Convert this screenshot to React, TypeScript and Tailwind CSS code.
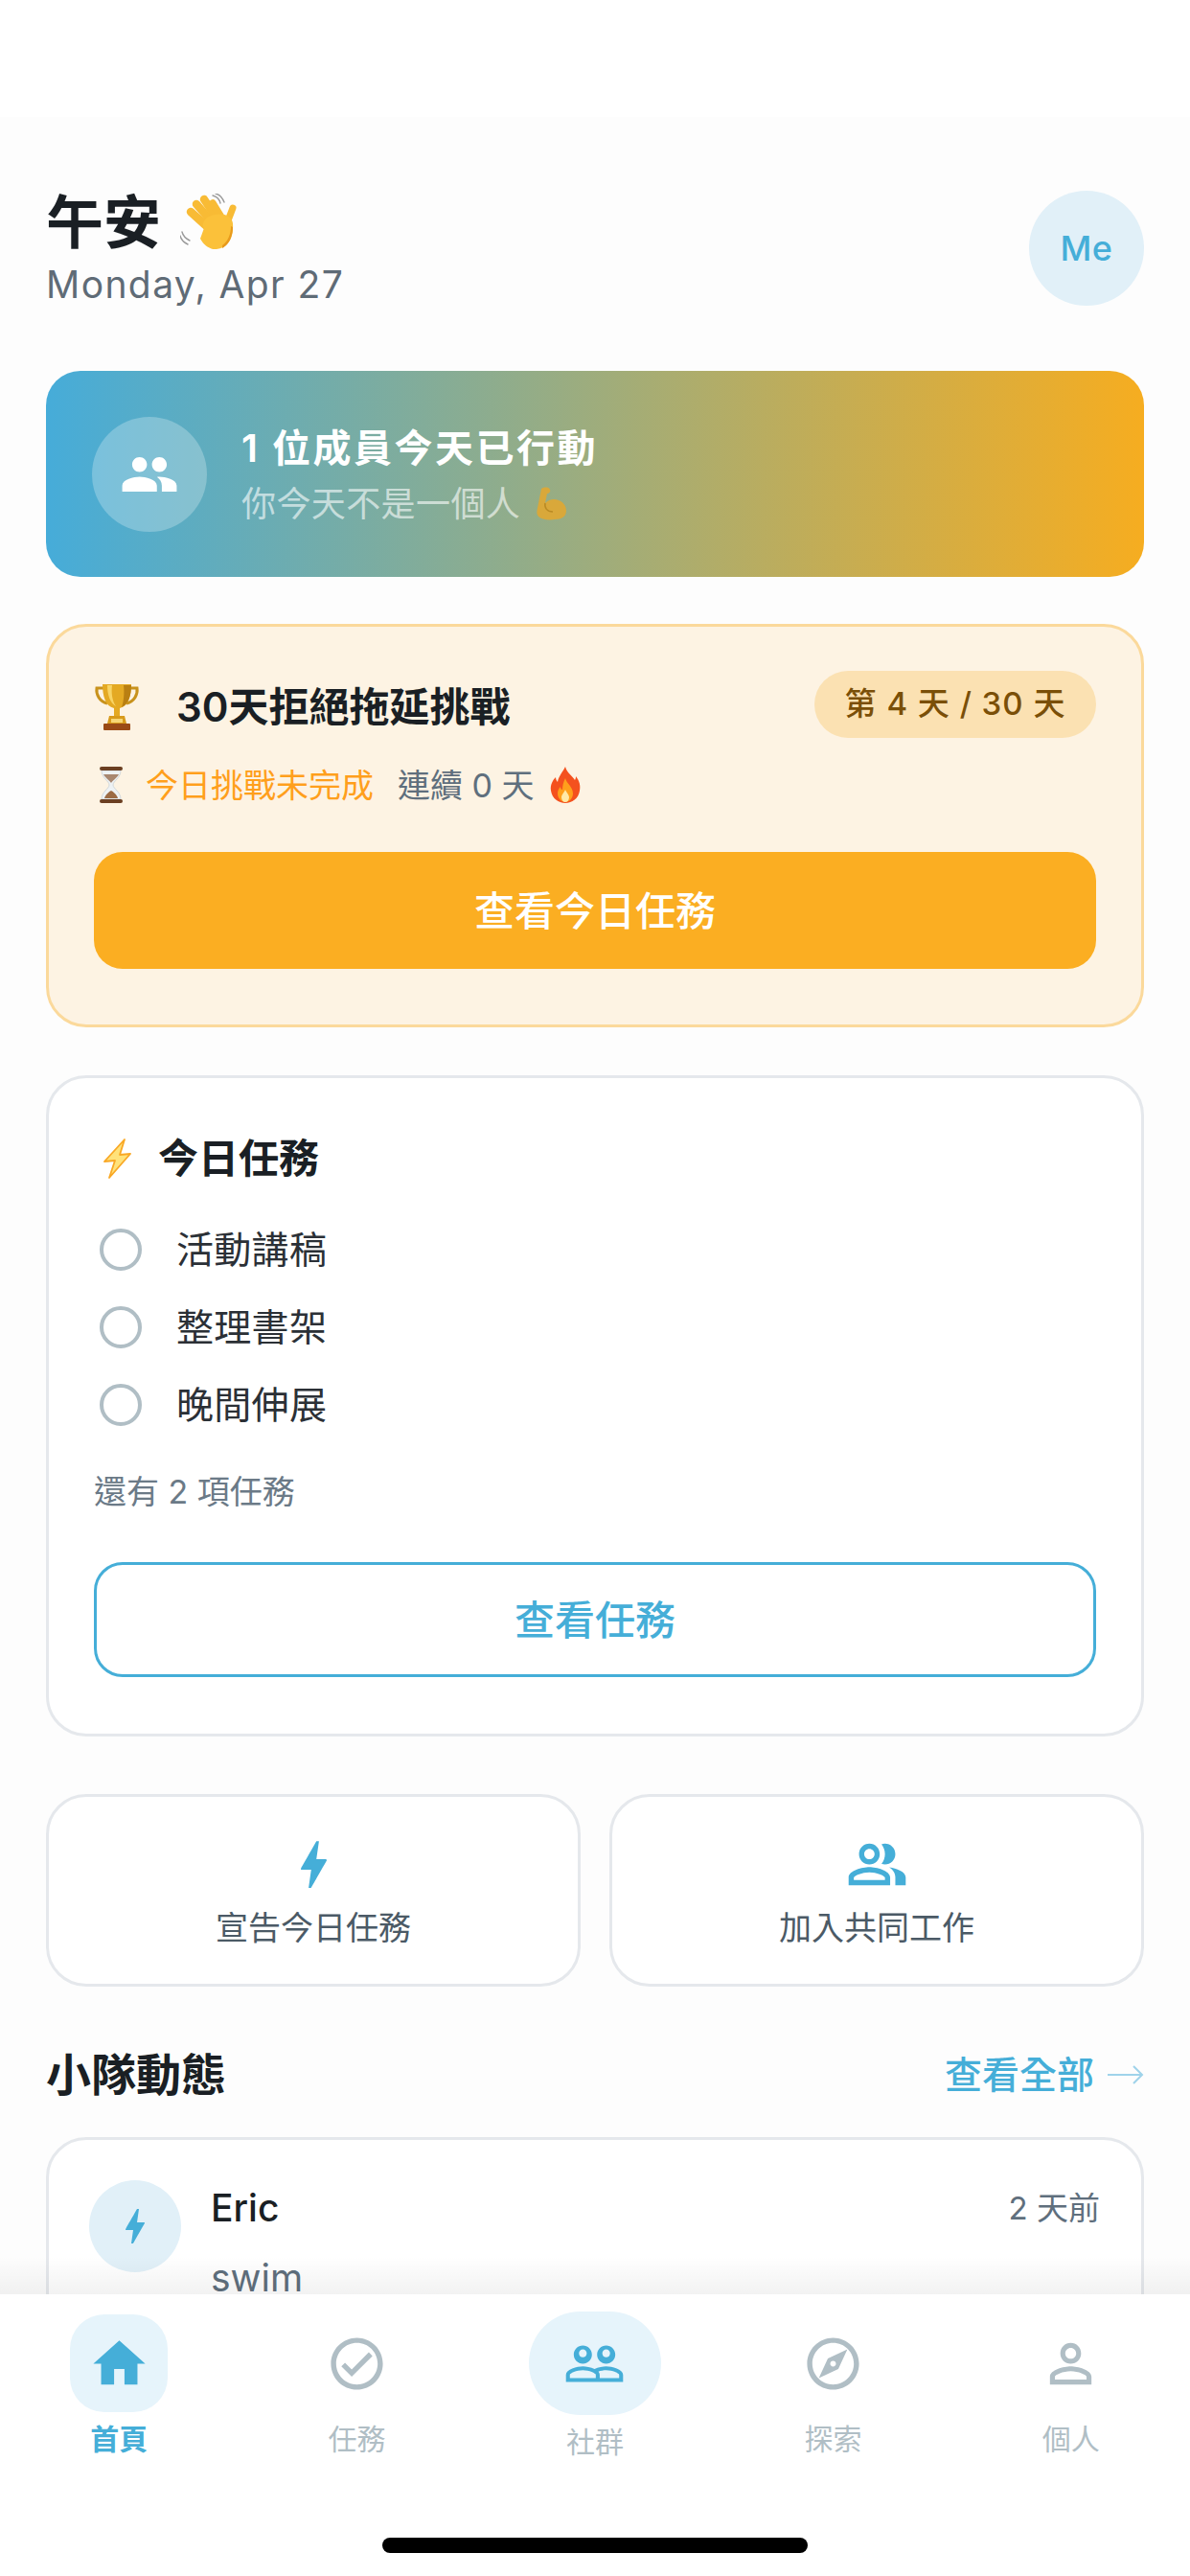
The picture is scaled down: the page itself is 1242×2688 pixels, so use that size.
const BLUE = "#45aed8"
const GREY = "#b0bec5"

const PATHS = {
  home: "M10 20v-6h4v6h5v-8h3L12 3 2 12h3v8z",
  check:
    "M12 2C6.48 2 2 6.48 2 12s4.48 10 10 10 10-4.48 10-10S17.52 2 12 2zm0 18c-4.41 0-8-3.59-8-8s3.59-8 8-8 8 3.59 8 8-3.59 8-8 8zm4.59-12.42L10 14.17l-2.59-2.58L6 13l4 4 8-8z",
  explore:
    "M12 2C6.48 2 2 6.48 2 12s4.48 10 10 10 10-4.48 10-10S17.52 2 12 2zm0 18c-4.41 0-8-3.59-8-8s3.59-8 8-8 8 3.59 8 8-3.59 8-8 8zm-5.5-2.5l7.51-3.49L17.5 6.5 9.99 9.99 6.5 17.5zm5.5-6.6c.61 0 1.1.49 1.1 1.1s-.49 1.1-1.1 1.1-1.1-.49-1.1-1.1.49-1.1 1.1-1.1z",
  person:
    "M12 5.9c1.16 0 2.1.94 2.1 2.1s-.94 2.1-2.1 2.1S9.9 9.16 9.9 8s.94-2.1 2.1-2.1m0 9c2.97 0 6.1 1.46 6.1 2.1v1.1H5.9V17c0-.64 3.13-2.1 6.1-2.1M12 4C9.79 4 8 5.79 8 8s1.79 4 4 4 4-1.79 4-4-1.79-4-4-4zm0 9c-2.67 0-8 1.34-8 4v3h16v-3c0-2.66-5.33-4-8-4z",
  people:
    "M16.5 13c-1.2 0-3.07.34-4.5 1-1.43-.67-3.3-1-4.5-1C5.33 13 1 14.08 1 16.25V19h22v-2.75c0-2.17-4.33-3.25-6.5-3.25zm-4 4.5h-10v-1.25c0-.54 2.56-1.75 5-1.75s5 1.21 5 1.75v1.25zm9 0H14v-1.25c0-.46-.2-.86-.52-1.22.88-.3 1.96-.53 3.02-.53 2.44 0 5 1.21 5 1.75v1.25zM7.5 12c1.93 0 3.5-1.57 3.5-3.5S9.43 5 7.5 5 4 6.57 4 8.5 5.57 12 7.5 12zm0-5.5c.83 0 1.5.67 1.5 1.5s-.67 1.5-1.5 1.5S6 8.83 6 8 6.67 6.5 7.5 6.5zm9 5.5c1.93 0 3.5-1.57 3.5-3.5S18.43 5 16.5 5 13 6.57 13 8.5s1.57 3.5 3.5 3.5zm0-5.5c.83 0 1.5.67 1.5 1.5s-.67 1.5-1.5 1.5S15 8.83 15 8s.67-1.5 1.5-1.5z",
  group:
    "M16 11c1.66 0 2.99-1.34 2.99-3S17.66 5 16 5c-1.66 0-3 1.34-3 3s1.34 3 3 3zm-8 0c1.66 0 2.99-1.34 2.99-3S9.66 5 8 5C6.34 5 5 6.34 5 8s1.34 3 3 3zm0 2c-2.33 0-7 1.17-7 3.5V19h14v-2.5c0-2.33-4.67-3.5-7-3.5zm8 0c-.29 0-.62.02-.97.05 1.16.84 1.97 1.97 1.97 3.45V19h6v-2.5c0-2.33-4.67-3.5-7-3.5z",
  peopleAlt:
    "M16.67 13.13C18.04 14.06 19 15.32 19 17v3h4v-3c0-2.18-3.57-3.47-6.33-3.87zM15 12c2.21 0 4-1.79 4-4s-1.79-4-4-4c-.47 0-.91.1-1.33.24C14.5 5.27 15 6.58 15 8s-.5 2.73-1.33 3.76c.42.14.86.24 1.33.24zM9 12c2.21 0 4-1.79 4-4s-1.79-4-4-4-4 1.79-4 4 1.79 4 4 4zm0-6c1.1 0 2 .9 2 2s-.9 2-2 2-2-.9-2-2 .9-2 2-2zM9 13c-2.67 0-8 1.34-8 4v3h16v-3c0-2.66-5.33-4-8-4zm6 5H3v-.99C3.2 16.29 6.3 15 9 15s5.8 1.29 6 2v1z",
  bolt: "M11 21h-1l1-7H7.5c-.58 0-.57-.32-.38-.66.19-.34.05-.08.07-.12C8.48 10.94 10.42 7.54 13 3h1l-1 7h3.5c.49 0 .56.33.47.51l-.07.15C12.96 17.55 11 21 11 21z",
}

const Icon = ({ d, size, color }: { d: string; size: number; color: string }) => (
  <svg width={size} height={size} viewBox="0 0 24 24" fill={color} className="shrink-0">
    <path d={d} fillRule="evenodd" />
  </svg>
)

const WaveEmoji = () => (
  <svg width="60" height="60" viewBox="0 0 60 60" className="shrink-0">
    <g fill="none" stroke="#9a9a9a" strokeWidth="1.4" strokeLinecap="round">
      <path d="M34 2c4 1 7 4 8 8" />
      <path d="M37 0c4 1 7 4 9 9" />
      <path d="M2 40c1 4 4 7 8 9" />
      <path d="M0 44c1 4 4 7 8 9" />
    </g>
    <g stroke="#f8bb35" strokeLinecap="round" fill="none">
      <path d="M32 38L11 19" strokeWidth="8.5" />
      <path d="M36 33L17 11" strokeWidth="8.5" />
      <path d="M41 30L25 6" strokeWidth="8.5" />
      <path d="M45 28L34 10" strokeWidth="7.5" />
      <path d="M47 36L55 15" strokeWidth="7" />
    </g>
    <path d="M25 36c-4-4 2-13 11-14 9-2 18 1 19 9 1 13-4 26-17 27-7 1-14-5-17-11z" fill="#fbc13a" />
    <path d="M44 54c6-4 9-12 9-20l2 1c0 10-4 18-11 22z" fill="#e89a1c" />
  </svg>
)

const MuscleEmoji = () => (
  <svg width="34" height="36" viewBox="0 0 34 36" className="shrink-0">
    <path
      d="M7 2c3-2 8-2 9 1 1 2-1 4-3 4l-2 10c4-4 9-5 14-3 5 2 8 6 8 11 0 6-5 9-12 9-7 1-14 0-17-3-2-2-2-5-1-9z"
      fill="#d9a83a"
    />
    <path d="M11 17c-1 5 2 9 8 9" fill="none" stroke="#b98a24" strokeWidth="1.5" />
  </svg>
)

const TrophyEmoji = () => (
  <svg width="48" height="50" viewBox="0 0 48 50" className="shrink-0">
    <path d="M11 5H3c-1 7 3 14 11 16M37 5h8c1 7-3 14-11 16" fill="none" stroke="#c8921c" strokeWidth="3" />
    <path d="M9 1h30c0 12-3 23-12 25v8h-6v-8C12 24 9 13 9 1z" fill="#e4a923" />
    <path d="M14 2h5c-1 8 0 16 4 22-6-3-9-12-9-22z" fill="#f8d465" />
    <path d="M31 2h8c0 11-3 20-10 23 2-6 3-14 2-23z" fill="#b97f12" />
    <path d="M16 34h16l2 8H14z" fill="#d89b1c" />
    <rect x="10" y="42" width="28" height="7" rx="1" fill="#9a4a16" />
    <rect x="18" y="37" width="12" height="4" fill="#f6d676" />
  </svg>
)

const HourglassEmoji = () => (
  <svg width="28" height="40" viewBox="0 0 28 40" className="shrink-0">
    <path d="M4 5c0 8 8 11 8 15s-8 7-8 15h20c0-8-8-11-8-15s8-7 8-15z" fill="#eef2f4" stroke="#c9d1d6" strokeWidth="0.8" />
    <path d="M6 9c2 4 7 7 8 9 1-2 6-5 8-9z" fill="#a88770" />
    <path d="M7 34c1-4 5-7 7-8 2 1 6 4 7 8z" fill="#9c6b45" />
    <rect x="2" y="1" width="24" height="4" rx="2" fill="#6b3f22" />
    <rect x="2" y="35" width="24" height="4" rx="2" fill="#6b3f22" />
  </svg>
)

const FireEmoji = () => (
  <svg width="32" height="38" viewBox="0 0 32 38" className="shrink-0">
    <path d="M16 0c2 7 7 9 10 14 1-2 1-3 1-4 4 5 5 10 4 15-1 8-8 13-15 13S2 33 1 25c-1-6 2-11 5-14 0 2 1 4 2 5 1-6 5-10 8-16z" fill="#f4511e" />
    <path d="M16 12c1 5 8 9 8 16 0 5-4 9-8 9s-8-4-8-9c0-3 1-5 3-7 0 2 1 3 2 3 0-4 1-8 3-12z" fill="#ff9f1c" />
    <path d="M16 24c1 3 4 5 4 8s-2 5-4 5-4-2-4-5 3-5 4-8z" fill="#ffe9a8" />
  </svg>
)

const VoltEmoji = () => (
  <svg width="30" height="42" viewBox="0 0 30 42" className="shrink-0">
    <path d="M22 1L1 24l11-1-6 18L28 16l-11 1z" fill="#ffe27a" stroke="#f9a825" strokeWidth="1.8" strokeLinejoin="round" />
  </svg>
)

const tasks = ["活動講稿", "整理書架", "晚間伸展"]

const navItems = [
  { label: "首頁", icon: PATHS.home, active: true },
  { label: "任務", icon: PATHS.check },
  { label: "社群", icon: PATHS.people, round: true },
  { label: "探索", icon: PATHS.explore },
  { label: "個人", icon: PATHS.person },
]

const NavItem = ({ label, icon, active, round }: { label: string; icon: string; active?: boolean; round?: boolean }) => {
  const highlighted = active || round
  return (
    <div className={`flex flex-col items-center ${round ? "-mt-[3px]" : ""}`}>
      <div
        className={`flex items-center justify-center ${round ? "h-[108px] w-[138px] rounded-full" : "h-[102px] w-[102px] rounded-[36px]"} ${highlighted ? "bg-[#e6f4fb]" : ""}`}
      >
        <Icon d={icon} size={65} color={highlighted ? BLUE : GREY} />
      </div>
      <span
        className={`mt-[8px] text-[30px] leading-[40px] ${active ? "font-semibold text-[#45aed8]" : "text-[#b0bec5]"}`}
      >
        {label}
      </span>
    </div>
  )
}

export default function App() {
  return (
    <div className="flex h-[2688px] w-[1242px] flex-col overflow-hidden bg-white font-['Inter','Noto_Sans_CJK_TC',sans-serif] text-[#1a1f24]">
      <div className="h-[122px] shrink-0 bg-white" />

      <main className="min-h-0 flex-1 overflow-hidden bg-[#fdfdfd] px-[48px] pt-[77px]">
        <header className="flex items-center justify-between">
          <div>
            <div className="flex h-[66px] items-center gap-[20px]">
              <h1 className="text-[60px] leading-[66px] font-semibold">午安</h1>
              <WaveEmoji />
            </div>
            <p className="mt-[9px] text-[39px] leading-[45px] tracking-[1.4px] text-[#5f6b76]">Monday, Apr 27</p>
          </div>
          <div className="flex h-[120px] w-[120px] items-center justify-center rounded-full bg-[#e1f0f8] text-[36px] font-medium tracking-[0.5px] text-[#45aed8]">
            Me
          </div>
        </header>

        <section className="mt-[68px] flex h-[215px] items-center gap-[36px] rounded-[36px] bg-linear-to-r/srgb from-[#46acd9] to-[#f6ad20] px-[48px]">
          <div className="flex h-[120px] w-[120px] items-center justify-center rounded-full bg-white/25">
            <Icon d={PATHS.group} size={62} color="#fff" />
          </div>
          <div>
            <p className="text-[40px] leading-[52px] font-semibold tracking-[2.5px] text-white">1 位成員今天已行動</p>
            <div className="mt-[10px] flex items-center gap-[15px]">
              <span className="text-[36px] leading-[44px] tracking-[0.4px] text-white/60">你今天不是一個人</span>
              <MuscleEmoji />
            </div>
          </div>
        </section>

        <section className="mt-[49px] rounded-[42px] border-[3px] border-[#fbd99b] bg-[#fdf3e3] px-[47px] pt-[46px] pb-[58px]">
          <div className="flex h-[70px] items-center justify-between">
            <div className="flex items-center gap-[38px] pt-[6px]">
              <TrophyEmoji />
              <h2 className="text-[42px] leading-[54px] font-semibold">30天拒絕拖延挑戰</h2>
            </div>
            <span className="flex h-[70px] w-[294px] items-center justify-center rounded-full bg-[#fbe1b2] text-[33px] font-medium tracking-[1px] text-[#7a4f08]">
              第 4 天 / 30 天
            </span>
          </div>
          <div className="mt-[29px] flex h-[40px] items-center">
            <span className="ml-[4px] flex">
              <HourglassEmoji />
            </span>
            <span className="ml-[22px] text-[34px] text-[#ff9f1c]">今日挑戰未完成</span>
            <span className="ml-[25px] text-[34px] text-[#5f6f7d]">連續 0 天</span>
            <span className="ml-[16px] flex">
              <FireEmoji />
            </span>
          </div>
          <button
            type="button"
            className="mt-[50px] h-[122px] w-full rounded-[30px] bg-[#fbae22] text-[42px] font-medium text-white"
          >
            查看今日任務
          </button>
        </section>

        <section className="mt-[50px] rounded-[42px] border-[3px] border-[#e5e8ec] bg-white px-[47px] pt-[60px] pb-[59px]">
          <div className="flex h-[48px] items-center gap-[27px] pl-[10px]">
            <VoltEmoji />
            <h2 className="text-[42px] leading-[48px] font-semibold">今日任務</h2>
          </div>
          <ul className="mt-[49px] flex flex-col gap-[37px]">
            {tasks.map((task) => (
              <li key={task} className="flex h-[44px] items-center gap-[36px]">
                <span className="ml-[6px] h-[44px] w-[44px] rounded-full border-[4px] border-[#b0bec5]" />
                <span className="text-[39px] leading-[44px] tracking-[0.3px] text-[#2b3036]">{task}</span>
              </li>
            ))}
          </ul>
          <p className="mt-[49px] text-[34px] leading-[40px] text-[#6b7a87]">還有 2 項任務</p>
          <button
            type="button"
            className="mt-[53px] h-[120px] w-full rounded-[30px] border-[3px] border-[#45aed8] text-[42px] font-medium text-[#45aed8]"
          >
            查看任務
          </button>
        </section>

        <div className="mt-[60px] grid grid-cols-2 gap-[30px]">
          <div className="flex h-[201px] flex-col items-center justify-center gap-[14px] rounded-[42px] border-[3px] border-[#e5e8ec] bg-white">
            <Icon d={PATHS.bolt} size={65} color={BLUE} />
            <span className="text-[34px] leading-[40px] text-[#4b5a66]">宣告今日任務</span>
          </div>
          <div className="flex h-[201px] flex-col items-center justify-center gap-[14px] rounded-[42px] border-[3px] border-[#e5e8ec] bg-white">
            <Icon d={PATHS.peopleAlt} size={65} color={BLUE} />
            <span className="text-[34px] leading-[40px] text-[#4b5a66]">加入共同工作</span>
          </div>
        </div>

        <div className="mt-[62px] flex h-[60px] items-center justify-between">
          <h2 className="text-[47px] leading-[60px] font-semibold">小隊動態</h2>
          <span className="flex items-center gap-[14px] text-[39px] font-medium text-[#45aed8]">
            查看全部
            <svg width="38" height="24" viewBox="0 0 38 24" fill="none" stroke="#9fd3ea" strokeWidth="2">
              <path d="M0 12h36M27 3l9 9-9 9" />
            </svg>
          </span>
        </div>

        <section className="mt-[35px] flex gap-[31px] rounded-[42px] border-[3px] border-[#e5e8ec] bg-white pt-[42px] pr-[43px] pb-[40px] pl-[42px]">
          <div className="flex h-[96px] w-[96px] shrink-0 items-center justify-center rounded-full bg-[#e1f0f8]">
            <Icon d={PATHS.bolt} size={48} color={BLUE} />
          </div>
          <div className="flex-1 pt-[1px]">
            <div className="flex items-center justify-between">
              <span className="text-[39px] leading-[56px] font-medium">Eric</span>
              <span className="text-[33px] leading-[56px] text-[#5f6f7d]">2 天前</span>
            </div>
            <p className="mt-[17px] text-[39px] leading-[56px] text-[#5f6f7d]">swim</p>
          </div>
        </section>
      </main>

      <nav className="relative flex h-[294px] shrink-0 flex-col bg-white pt-[21px]">
        <div className="absolute inset-x-0 bottom-full h-[40px] bg-linear-to-b from-transparent to-black/5" />
        <div className="grid grid-cols-5">
          {navItems.map((item) => (
            <NavItem key={item.label} {...item} />
          ))}
        </div>
        <div className="mx-auto mt-auto mb-[24px] h-[16px] w-[444px] rounded-full bg-black" />
      </nav>
    </div>
  )
}
